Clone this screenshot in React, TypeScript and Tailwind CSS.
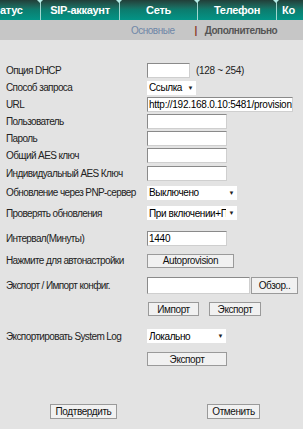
import type { ReactNode } from "react";

const font = { fontFamily: "Tahoma, 'Liberation Sans', 'DejaVu Sans', sans-serif" };

const tabs = [
  { label: "атус", w: "w-[41px]", align: "justify-start pl-[0px]" },
  { label: "SIP-аккаунт", w: "w-[79px]", align: "justify-center" },
  { label: "Сеть", w: "w-[78px]", align: "justify-center" },
  { label: "Телефон", w: "w-[79px]", align: "justify-center" },
  { label: "Ко", w: "w-[40px]", align: "justify-start pl-[5px]" },
];

function Row({
  label,
  className,
  children,
}: {
  label?: string;
  className: string;
  children?: ReactNode;
}) {
  return (
    <div className={`flex items-center ${className}`}>
      <div className="w-[147px] shrink-0 whitespace-nowrap pl-[6px] text-[10px] tracking-[-0.6px] text-[#222]">
        {label}
      </div>
      <div className="flex items-center">{children}</div>
    </div>
  );
}

function TextBox({ w, value }: { w: string; value?: string }) {
  return (
    <div
      className={`${w} h-[15px] overflow-hidden whitespace-nowrap border border-t-[#8a8a8a] border-l-[#8a8a8a] border-r-[#cfcfcf] border-b-[#cfcfcf] bg-white pl-[1px] text-[10px] leading-[13px] tracking-[-0.25px] text-black`}
    >
      {value}
    </div>
  );
}

function Select({ w, value }: { w: string; value: string }) {
  return (
    <div
      className={`${w} flex h-[14px] items-center bg-white pl-[2px] pr-[3px] text-[10px] tracking-[-0.4px] text-black`}
    >
      <span className="min-w-0 flex-1 overflow-hidden whitespace-nowrap">{value}</span>
      <span className="ml-[2px] shrink-0 text-[6px] leading-none text-[#222]">▼</span>
    </div>
  );
}

function Btn({ w, children, className = "" }: { w: string; children: ReactNode; className?: string }) {
  return (
    <div
      className={`${w} ${className} flex h-[14px] items-center justify-center whitespace-nowrap border border-[#9a9a9a] bg-[#f1f1f1] text-[10px] tracking-[-0.4px] text-[#111]`}
    >
      {children}
    </div>
  );
}

export default function App() {
  return (
    <div className="h-[429px] w-[303px] overflow-hidden bg-[#e3e3e3]" style={font}>
      {/* top tabs */}
      <div className="flex h-[20px] bg-gradient-to-b from-[#213f39] via-[#0b7d6f] to-[#029486]">
        {tabs.map((t, i) => (
          <div
            key={t.label}
            className={`relative flex ${t.w} ${t.align} shrink-0 items-center whitespace-nowrap text-[11px] font-bold tracking-[-0.3px] text-white ${
              i < tabs.length - 1 ? "border-r border-[#9fd6cf]" : ""
            }`}
          >
            {t.label}
            {i < tabs.length - 1 && (
              <span className="absolute right-[-3px] top-0 h-0 w-0 border-x-[3px] border-t-[3px] border-x-transparent border-t-[#b6ebe6]" />
            )}
          </div>
        ))}
      </div>

      {/* sub tabs */}
      <div className="flex h-[20px] items-center whitespace-nowrap bg-[#c6c6c6] text-[10px] tracking-[-0.5px]">
        <span className="ml-[131px] text-[#6f86a6]">Основные</span>
        <span className="ml-[20px] font-bold text-[#8a3a2a]">|</span>
        <span className="ml-[8px] font-bold text-[#555]">Дополнительно</span>
      </div>

      <div className="pt-[22px]">
        <Row label="Опция DHCP" className="h-[17px]">
          <TextBox w="w-[43px]" />
          <span className="ml-[6px] whitespace-nowrap text-[10px] tracking-[-0.3px] text-[#222]">(128 ~ 254)</span>
        </Row>
        <Row label="Способ запроса" className="h-[17px]">
          <Select w="w-[49px]" value="Ссылка" />
        </Row>
        <Row label="URL" className="h-[17px]">
          <TextBox w="w-[146px]" value="http://192.168.0.10:5481/provision" />
        </Row>
        <Row label="Пользователь" className="h-[17px]">
          <TextBox w="w-[80px]" />
        </Row>
        <Row label="Пароль" className="h-[17px]">
          <TextBox w="w-[80px]" />
        </Row>
        <Row label="Общий AES ключ" className="h-[17px]">
          <TextBox w="w-[80px]" />
        </Row>
        <Row label="Индивидуальный AES Ключ" className="h-[18px]">
          <TextBox w="w-[80px]" />
        </Row>
        <Row label="Обновление через PNP-сервер" className="h-[21px]">
          <Select w="w-[90px]" value="Выключено" />
        </Row>
        <Row label="Проверять обновления" className="h-[20px]">
          <Select w="w-[90px]" value="При включении+Периодически" />
        </Row>
        <Row label="Интервал(Минуты)" className="mt-[5px] h-[20px]">
          <TextBox w="w-[80px]" value="1440" />
        </Row>
        <Row label="Нажмите для автонастройки" className="mt-[4px] h-[17px]">
          <Btn w="w-[87px]">Autoprovision</Btn>
        </Row>
        <Row label="Экспорт / Импорт конфиг." className="mt-[7px] h-[19px]">
          <div className="h-[17px] w-[103px] border border-t-[#8a8a8a] border-l-[#8a8a8a] border-r-[#cfcfcf] border-b-[#cfcfcf] bg-white" />
          <Btn w="w-[47px]" className="ml-[1px] h-[17px]">
            Обзор..
          </Btn>
        </Row>
        <Row className="mt-[7px] h-[14px]">
          <Btn w="w-[51px]" className="ml-[1px]">
            Импорт
          </Btn>
          <Btn w="w-[52px]" className="ml-[10px]">
            Экспорт
          </Btn>
        </Row>
        <Row label="Экспортировать System Log" className="mt-[13px] h-[14px]">
          <Select w="w-[79px]" value="Локально" />
        </Row>
        <Row className="mt-[9px] h-[14px]">
          <Btn w="w-[80px]">Экспорт</Btn>
        </Row>

        <div className="mt-[38px] flex">
          <Btn w="w-[67px]" className="ml-[50px] h-[15px]">
            Подтвердить
          </Btn>
          <Btn w="w-[53px]" className="ml-[90px] h-[15px]">
            Отменить
          </Btn>
        </div>
      </div>
    </div>
  );
}
